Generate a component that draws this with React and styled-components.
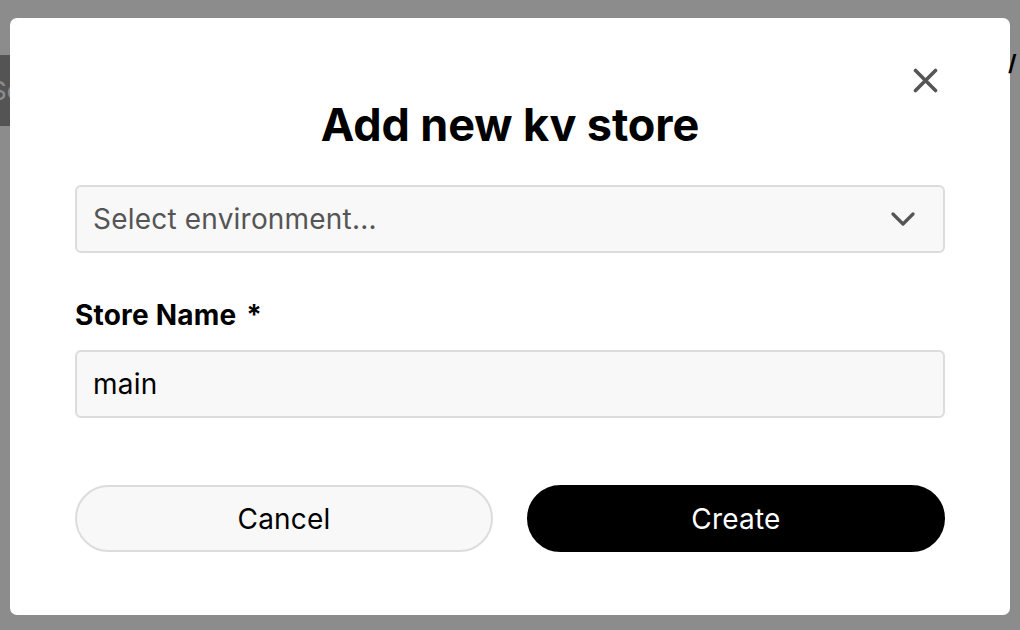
import React from 'react';
import styled, { createGlobalStyle } from 'styled-components';

const GlobalStyle = createGlobalStyle`
  html, body {
    margin: 0;
    padding: 0;
    background: #fff;
    font-family: Inter, "Liberation Sans", sans-serif;
  }
`;

const Page = styled.div`
  position: relative;
  width: 1020px;
  height: 630px;
  overflow: hidden;
`;

const PageHeader = styled.header`
  display: flex;
  justify-content: space-between;
  align-items: flex-start;
  padding-top: 55px;
`;

const SearchButton = styled.button`
  height: 71px;
  width: 120px;
  margin-left: -98px;
  border: none;
  background: #9a9a9a;
  color: #fff;
  font-family: inherit;
  font-size: 26px;
  text-align: left;
  padding: 0 0 0 88px;
`;

const PageTitle = styled.h1`
  margin: -4px 0 0 0;
  font-size: 22px;
  line-height: 24px;
  font-weight: 700;
  color: #000;
  position: relative;
  z-index: 3;
  width: 12px;
  overflow: hidden;
  white-space: nowrap;
`;

const Overlay = styled.div`
  position: absolute;
  inset: 0;
  background: rgba(0, 0, 0, 0.45);
  display: flex;
  justify-content: center;
  align-items: flex-start;
  padding-top: 18px;
  z-index: 2;
`;

const Modal = styled.div`
  position: relative;
  width: 1000px;
  height: 597px;
  box-sizing: border-box;
  background: #fff;
  border-radius: 7px;
  padding: 0 65px;
  display: flex;
  flex-direction: column;
`;

const CloseButton = styled.button`
  position: absolute;
  top: 50px;
  right: 72px;
  width: 25px;
  height: 25px;
  padding: 0;
  border: none;
  background: none;
  cursor: pointer;
  display: flex;
`;

const Title = styled.h2`
  margin: 83px 0 0;
  height: 48px;
  line-height: 48px;
  text-align: center;
  font-size: 45px;
  font-weight: 700;
  color: #000;
  letter-spacing: -0.1px;
`;

const Field = styled.div`
  display: flex;
  flex-shrink: 0;
  align-items: center;
  justify-content: space-between;
  height: 68px;
  box-sizing: border-box;
  margin-top: ${(p) => p.$top}px;
  padding: 0 28px 0 16px;
  background: #f8f8f8;
  border: 2px solid #dcdcdc;
  border-radius: 6px;
  font-size: 28px;
  letter-spacing: 0.2px;
  color: ${(p) => (p.$placeholder ? '#555' : '#000')};
`;

const Label = styled.label`
  margin-top: 45px;
  font-size: 28px;
  font-weight: 700;
  color: #000;
  line-height: 34px;
  letter-spacing: 0.2px;
`;

const Asterisk = styled.span`
  margin-left: 10px;
`;

const ButtonRow = styled.div`
  display: grid;
  grid-template-columns: 1fr 1fr;
  gap: 34px;
  margin-top: 67px;
`;

const Button = styled.button`
  height: 67px;
  border-radius: 34px;
  font-family: inherit;
  font-size: 28px;
  letter-spacing: 0.2px;
  cursor: pointer;
  background: ${(p) => (p.$primary ? '#000' : '#f8f8f8')};
  color: ${(p) => (p.$primary ? '#fff' : '#000')};
  border: 2px solid ${(p) => (p.$primary ? '#000' : '#dcdcdc')};
`;

const Chevron = () => (
  <svg width="24" height="14" viewBox="0 0 24 14" fill="none">
    <path d="M2 2l10 10L22 2" stroke="#555" strokeWidth="3.2" strokeLinecap="round" strokeLinejoin="round" />
  </svg>
);

const CloseIcon = () => (
  <svg width="25" height="25" viewBox="0 0 25 25" fill="none">
    <path d="M2.5 2.5l20 20M22.5 2.5l-20 20" stroke="#555" strokeWidth="3.6" strokeLinecap="round" />
  </svg>
);

const App = () => {
  return (
    <Page>
      <GlobalStyle />
      <PageHeader>
        <SearchButton>Search</SearchButton>
        <PageTitle>/</PageTitle>
      </PageHeader>
      <Overlay>
        <Modal>
          <CloseButton aria-label="Close">
            <CloseIcon />
          </CloseButton>
          <Title>Add new kv store</Title>
          <Field $top={36} $placeholder>
            <span>Select environment...</span>
            <Chevron />
          </Field>
          <Label>
            Store Name<Asterisk>*</Asterisk>
          </Label>
          <Field $top={18}>main</Field>
          <ButtonRow>
            <Button>Cancel</Button>
            <Button $primary>Create</Button>
          </ButtonRow>
        </Modal>
      </Overlay>
    </Page>
  );
};

export default App;
